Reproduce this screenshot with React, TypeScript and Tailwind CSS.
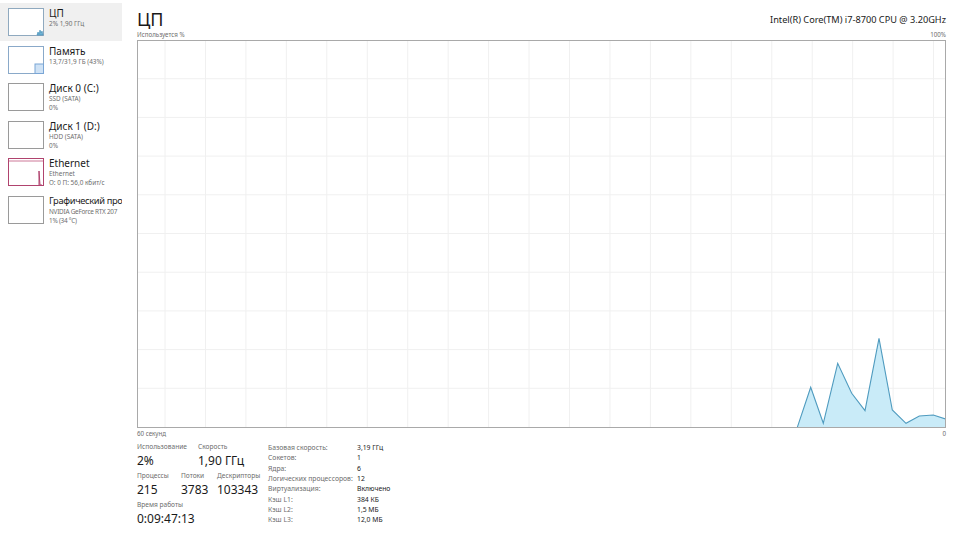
import React from "react";

const font = { fontFamily: '"Noto Sans", "Open Sans", sans-serif' };

function Thumb({ kind }: { kind: string }) {
  const stroke = kind === "eth" ? "#b0436e" : kind === "mem" ? "#8aa9c9" : kind === "cpu" ? "#8fa9bf" : "#9a9a9a";
  return (
    <svg width="36" height="28" viewBox="0 0 36 28" className="shrink-0">
      <rect x="0.5" y="0.5" width="35" height="27" fill="white" stroke={stroke} strokeWidth="1" />
      {kind === "cpu" && (
        <polygon points="29,27 30,24 31,26 32,22 33,25 34,23 35,27" fill="#6fb3d4" stroke="#3c8bb5" strokeWidth="0.6" />
      )}
      {kind === "mem" && <rect x="27" y="18" width="8.5" height="9.5" fill="#cfe2f5" stroke="#7aa6d6" strokeWidth="1" />}
      {kind === "eth" && (
        <>
          <line x1="0.5" y1="3" x2="35.5" y2="3" stroke="#c0577f" strokeWidth="0.8" />
          <polyline points="31,27 31,13 32,27 34,27" fill="#f2d5e0" stroke="#b0436e" strokeWidth="1" />
        </>
      )}
    </svg>
  );
}

const items = [
  { kind: "cpu", title: "ЦП", lines: ["2% 1,90 ГГц"], sel: true },
  { kind: "mem", title: "Память", lines: ["13,7/31,9 ГБ (43%)"] },
  { kind: "d0", title: "Диск 0 (C:)", lines: ["SSD (SATA)", "0%"] },
  { kind: "d1", title: "Диск 1 (D:)", lines: ["HDD (SATA)", "0%"] },
  { kind: "eth", title: "Ethernet", lines: ["Ethernet", "О: 0 П: 56,0 кбит/с"] },
  { kind: "gpu", title: "Графический про", lines: ["NVIDIA GeForce RTX 207", "1% (34 °C)"], tight: true },
];

function Graph() {
  const W = 809;
  const H = 387;
  const vx: number[] = [];
  for (let x = 28; x < W; x += 40.45) vx.push(x);
  const hy: number[] = [];
  for (let i = 1; i < 10; i++) hy.push(i * 38.7);
  const pts: [number, number][] = [
    [797.3, 427.3], [810.7, 387.3], [823.3, 423.3], [837.7, 363.3], [851.7, 393.3], [865, 410.7],
    [879, 338.3], [892.3, 410], [906, 423.3], [919.3, 416], [933.3, 415], [946.7, 419.3],
  ].map(([x, y]) => [x - 137, y - 40] as [number, number]);
  const line = pts.map((p) => p.join(",")).join(" ");
  const area = `${pts[0][0]},${H} ${line} ${W},${H}`;
  return (
    <svg width={W} height={H + 1} viewBox={`0 0 ${W} ${H + 1}`} className="block">
      <rect x="0" y="0" width={W} height={H + 1} fill="white" />
      {vx.map((x, i) => (
        <line key={"v" + i} x1={x} y1="0" x2={x} y2={H} stroke="#f0f0f0" strokeWidth="1" />
      ))}
      {hy.map((y, i) => (
        <line key={"h" + i} x1="0" y1={y} x2={W} y2={y} stroke="#f0f0f0" strokeWidth="1" />
      ))}
      <polygon points={area} fill="#c9ebf8" />
      <polyline points={line} fill="none" stroke="#4f9bbf" strokeWidth="1.1" />
      <rect x="0.5" y="0.5" width={W - 1} height={H} fill="none" stroke="#a9a9a9" strokeWidth="1" />
    </svg>
  );
}

function Stat({ label, value, w }: { label: string; value: string; w: string }) {
  return (
    <div className={`flex flex-col ${w} whitespace-nowrap`}>
      <div className="text-[6.6px] leading-[10px] text-[#6d6d6d]">{label}</div>
      <div className="text-[12px] leading-[17px] text-[#1a1a1a]">{value}</div>
    </div>
  );
}

const info = [
  ["Базовая скорость:", "3,19 ГГц"],
  ["Сокетов:", "1"],
  ["Ядра:", "6"],
  ["Логических процессоров:", "12"],
  ["Виртуализация:", "Включено"],
  ["Кэш L1:", "384 КБ"],
  ["Кэш L2:", "1,5 МБ"],
  ["Кэш L3:", "12,0 МБ"],
];

export default function App() {
  return (
    <div className="w-[960px] h-[535px] bg-white flex overflow-hidden" style={font}>
      <div className="w-[137px] shrink-0 pt-[3px] flex flex-col">
        {items.map((it, i) => (
          <div
            key={i}
            className={`h-[37.6px] w-[122px] flex gap-[5px] pl-[8px] pt-[4px] overflow-hidden ${it.sel ? "bg-[#f0f0f0]" : ""}`}
          >
            <div className="pt-[1px]">
              <Thumb kind={it.kind} />
            </div>
            <div className="flex flex-col min-w-0 whitespace-nowrap">
              <div
                className={`leading-[12px] text-[#1a1a1a] ${it.tight ? "text-[9.3px] tracking-[-0.35px]" : "text-[10px]"}`}
              >
                {it.title}
              </div>
              {it.lines.map((l, j) => (
                <div
                  key={j}
                  className={`text-[6.4px] leading-[9px] text-[#6e6e6e] ${it.tight ? "tracking-[-0.25px]" : ""}`}
                >
                  {l}
                </div>
              ))}
            </div>
          </div>
        ))}
      </div>
      <div className="w-[809px] shrink-0 flex flex-col">
        <div className="h-[31px] flex items-end justify-between">
          <div className="text-[18px] leading-[22px] text-[#1a1a1a] mb-[1px]">ЦП</div>
          <div className="text-[9.2px] leading-[12px] text-[#1a1a1a] mb-[5px]">Intel(R) Core(TM) i7-8700 CPU @ 3.20GHz</div>
        </div>
        <div className="h-[9px] flex justify-between items-start text-[6.2px] leading-[8px] text-[#6d6d6d]">
          <span>Используется %</span>
          <span>100%</span>
        </div>
        <Graph />
        <div className="h-[12px] flex justify-between items-center text-[6.2px] leading-[8px] text-[#6d6d6d]">
          <span>60 секунд</span>
          <span>0</span>
        </div>
        <div className="flex pt-[2px]">
          <div className="w-[131px] flex flex-col gap-[2px]">
            <div className="flex">
              <Stat label="Использование" value="2%" w="w-[61px]" />
              <Stat label="Скорость" value="1,90 ГГц" w="w-[60px]" />
            </div>
            <div className="flex">
              <Stat label="Процессы" value="215" w="w-[44px]" />
              <Stat label="Потоки" value="3783" w="w-[36px]" />
              <Stat label="Дескрипторы" value="103343" w="w-[50px]" />
            </div>
            <div className="flex">
              <Stat label="Время работы" value="0:09:47:13" w="w-[80px]" />
            </div>
          </div>
          <div className="flex flex-col pt-[1px]">
            {info.map(([k, v], i) => (
              <div key={i} className="flex h-[10.3px] items-center text-[6.8px] leading-[10px] whitespace-nowrap">
                <span className="w-[89px] text-[#6d6d6d]">{k}</span>
                <span className="text-[#1a1a1a]">{v}</span>
              </div>
            ))}
          </div>
        </div>
      </div>
    </div>
  );
}
